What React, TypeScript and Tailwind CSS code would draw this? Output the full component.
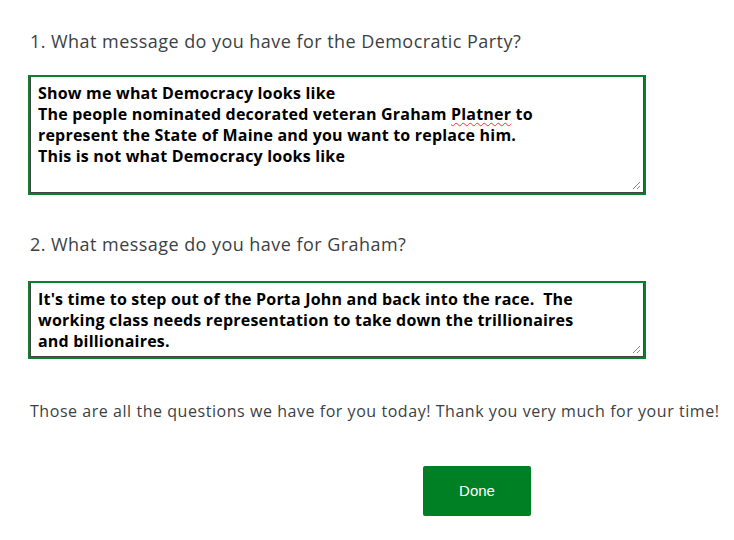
import React from "react";

const Grip = () => (
  <svg className="absolute right-[2px] bottom-[2px]" width="9" height="9" viewBox="0 0 9 9">
    <path d="M8 1 L1 8 M8 5 L5 8" stroke="#888" strokeWidth="1" />
  </svg>
);

const Answer = ({ h, children }: { h: string; children: React.ReactNode }) => (
  <div className={`border-2 border-[#0a7f2e] ${h}`}>
    <div className="relative h-full border border-[#444] border-t-0 px-[7px] pt-[6px] text-[16px] leading-[21px] font-bold text-black font-['Open_Sans',sans-serif] tracking-[0.2px]">
      {children}
      <Grip />
    </div>
  </div>
);

export default function App() {
  return (
    <div className="w-[734px] h-[540px] bg-white pl-[28px] pr-[88px] pt-[29px] font-['Open_Sans',sans-serif]">
      <p className="pl-[2px] text-[18px] leading-[25px] tracking-[0.45px] text-[#3b3f44] whitespace-nowrap">
        1. What message do you have for the Democratic Party?
      </p>
      <div className="mt-[21px]">
        <Answer h="h-[120px]">
          <div>Show me what Democracy looks like</div>
          <div>
            The people nominated decorated veteran Graham{" "}
            <span className="underline decoration-wavy decoration-red-500 decoration-1 underline-offset-2">Platner</span> to
          </div>
          <div>represent the State of Maine and you want to replace him.</div>
          <div>This is not what Democracy looks like</div>
        </Answer>
      </div>
      <p className="pl-[2px] mt-[37px] text-[18px] leading-[25px] tracking-[0.45px] text-[#3b3f44] whitespace-nowrap">
        2. What message do you have for Graham?
      </p>
      <div className="mt-[24px]">
        <Answer h="h-[78px]">
          <div>It's time to step out of the Porta John and back into the race.&nbsp; The</div>
          <div>working class needs representation to take down the trillionaires</div>
          <div>and billionaires.</div>
        </Answer>
      </div>
      <p className="pl-[2px] mt-[41px] text-[16px] leading-[22px] tracking-[0.55px] text-[#3b3f44] whitespace-nowrap">
        Those are all the questions we have for you today! Thank you very much for your time!
      </p>
      <div className="flex pl-[395px] mt-[44px]">
        <button className="w-[108px] h-[50px] rounded-[2px] bg-[#008024] text-white text-[15px] font-['Liberation_Sans',sans-serif]">
          Done
        </button>
      </div>
    </div>
  );
}
